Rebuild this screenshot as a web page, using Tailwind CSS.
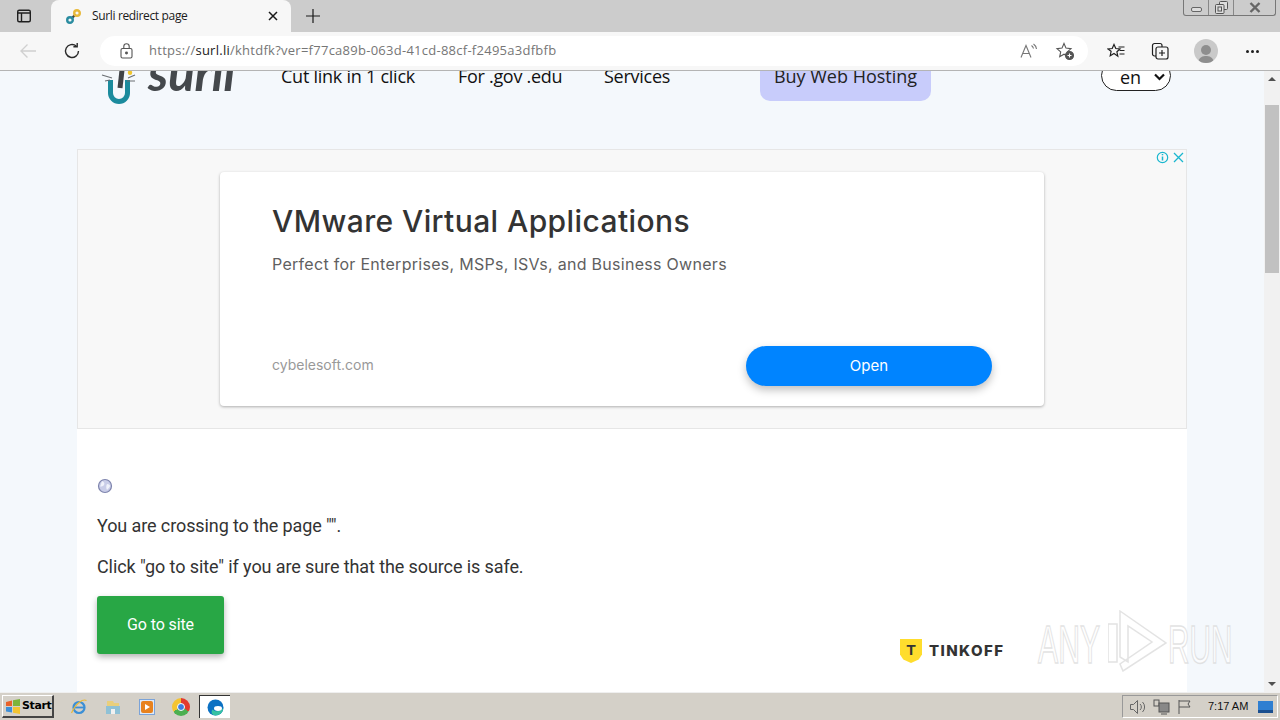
<!DOCTYPE html>
<html><head><meta charset="utf-8"><title>Surli redirect page</title>
<script src="https://cdn.jsdelivr.net/npm/@tailwindcss/browser@4"></script></head>
<body class="w-[1280px] h-[720px] overflow-hidden flex flex-col bg-white font-['Roboto',sans-serif]">
<!-- tab strip -->
<div class="h-[32px] shrink-0 bg-[#cccccc] flex relative">
  <div class="w-[51px] pr-[3px] flex items-center justify-center">
    <svg width="16" height="16" viewBox="0 0 16 16" fill="none" stroke="#1f1f1f" stroke-width="1.4"><rect x="1.7" y="2.2" width="12.6" height="11.6" rx="1.5"/><path d="M1.7 5h12.6M5.5 5v8.8" /></svg>
  </div>
  <div class="w-[240px] h-[32px] bg-[#f7f7f7] rounded-t-[8px] flex items-center pl-[14px] pr-[12px]">
    <svg width="17" height="17" viewBox="0 0 17 17" fill="none" stroke-width="2.4" stroke-linecap="round"><path d="M7 10l3-3" stroke="#444"/><circle cx="5" cy="12" r="2.8" stroke="#2a8ca0"/><circle cx="12" cy="5" r="2.8" stroke="#e8b93a"/></svg>
    <span class="ml-[10px] text-[12px] tracking-[-0.35px] text-[#1a1a1a] font-['Open_Sans',sans-serif] flex-1 whitespace-nowrap">Surli redirect page</span>
    <svg width="12" height="12" viewBox="0 0 12 12" stroke="#1a1a1a" stroke-width="1.5"><path d="M2 2l8 8M10 2l-8 8"/></svg>
  </div>
  <div class="w-[44px] flex items-center justify-center">
    <svg width="14" height="14" viewBox="0 0 14 14" stroke="#1a1a1a" stroke-width="1.2"><path d="M7 0v14M0 7h14"/></svg>
  </div>
  <div class="absolute left-[1183px] top-0 w-[93px] h-[16px] border border-t-0 border-[#777] rounded-b-[3px] flex items-center">
    <div class="w-[25px] h-full border-r border-[#888] flex items-center justify-center"><div class="w-[11px] h-[5px] border border-[#666] rounded-[2px] bg-[#ddd] mt-[3px]"></div></div>
    <div class="w-[25px] h-full border-r border-[#888] flex items-center justify-center"><svg width="13" height="13" viewBox="0 0 13 13" fill="#ddd" stroke="#555"><rect x="4.5" y="0.5" width="8" height="8" rx="1"/><rect x="0.5" y="3.5" width="8.5" height="9" rx="1"/><rect x="3" y="6" width="3.5" height="4"/></svg></div>
    <div class="flex-1 flex items-center justify-center"><svg width="12" height="11" viewBox="0 0 12 11" stroke="#666" stroke-width="2.4"><path d="M1.5 1l9 9M10.5 1l-9 9"/></svg></div>
  </div>
</div>
<!-- toolbar -->
<div class="h-[39px] shrink-0 bg-[#f7f7f7] border-b border-[#b4b4b4] flex items-center">
  <div class="w-[56px] flex justify-center">
    <svg width="18" height="16" viewBox="0 0 18 16" fill="none" stroke="#d0d0d0" stroke-width="1.4"><path d="M17 8H2M8.5 1.5L2 8l6.5 6.5"/></svg>
  </div>
  <div class="w-[32px] flex justify-center">
    <svg width="18" height="18" viewBox="0 0 18 18" fill="none" stroke="#2a2a2a" stroke-width="1.4"><path d="M15.5 9a6.5 6.5 0 1 1-2.2-4.9"/><path d="M14.2 1v3.8h-3.8"/></svg>
  </div>
  <div class="ml-[12px] w-[988px] h-[30px] bg-white rounded-full flex items-center pl-[20px]">
    <svg width="13" height="16" viewBox="0 0 13 16" fill="none" stroke="#555" stroke-width="1.1"><rect x="1" y="5.5" width="11" height="9.5" rx="1.5"/><path d="M3.8 5.5V3.5a2.7 2.7 0 0 1 5.4 0v2"/><circle cx="6.5" cy="10" r="0.9" fill="#555"/></svg>
    <span class="ml-[16px] text-[13px] tracking-[0.26px] text-[#767676] font-['Open_Sans',sans-serif] whitespace-nowrap">https://<span class="text-[#1a1a1a]">surl.li</span>/khtdfk?ver=f77ca89b-063d-41cd-88cf-f2495a3dfbfb</span>
    <div class="ml-auto flex items-center gap-[17px] pr-[13px]">
      <svg width="18" height="16" viewBox="0 0 18 16" fill="none" stroke="#777" stroke-width="1.1"><path d="M1 14.5L6 2.5l5 12M2.8 10.5h6.4"/><path d="M11.5 2.5a5 5 0 0 1 2 3M13.5 1a7 7 0 0 1 3 5"/></svg>
      <svg width="20" height="20" viewBox="0 0 20 20" fill="none" stroke="#555" stroke-width="1.1"><path d="M9 2.5l2 4.6 5 .5-3.7 3.3 1 4.8L9 13.2l-4.3 2.5 1-4.8L2 7.600l5-.5z"/><circle cx="14.500" cy="14.500" r="4" fill="#555"/><path d="M14.500 12.500v4M12.500 14.500h4" stroke="#fff"/></svg>
    </div>
  </div>
  <div class="ml-[15px] w-[26px] flex justify-center"><svg width="18" height="17" viewBox="0 0 18 17" fill="none" stroke="#1f1f1f" stroke-width="1.2"><path d="M7 1.500l1.800 4 4.200.5-3.100 2.800.9 4.400L7 10.500l-3.800 2.200.9-4.400L1 6l4.200-.5z"/><path d="M11.500 4h6M12.500 7.500h5M12.500 11h5"/></svg></div>
  <div class="ml-[18px] w-[26px] flex justify-center"><svg width="18" height="18" viewBox="0 0 18 18" fill="none" stroke="#1f1f1f" stroke-width="1.2"><path d="M5 14H3.500A2 2 0 0 1 1.500 12V3.500a2 2 0 0 1 2-2H9a2 2 0 0 1 2 2V5"/><rect x="5" y="5" width="12" height="12" rx="2" fill="#f7f7f7"/><path d="M11 8v6M8 11h6"/></svg></div>
  <div class="ml-[21px] w-[24px] h-[24px] rounded-full bg-[#c9c9c9] flex flex-col items-center justify-end overflow-hidden"><div class="w-[10px] h-[10px] rounded-full bg-[#8e8e8e] mb-[1px]"></div><div class="w-[16px] h-[7px] rounded-t-full bg-[#8e8e8e]"></div></div>
  <div class="ml-[28px] flex gap-[2px]"><div class="w-[3px] h-[3px] bg-[#1f1f1f] rounded-full"></div><div class="w-[3px] h-[3px] bg-[#1f1f1f] rounded-full"></div><div class="w-[3px] h-[3px] bg-[#1f1f1f] rounded-full"></div></div>
</div>
<!-- page viewport -->
<div class="h-[621px] shrink-0 flex overflow-hidden relative">
  <div class="w-[1264px] bg-[#f4f8fc] overflow-hidden">
    <!-- scrolled header -->
    <div class="h-[78px] -mt-[48px] flex items-end relative">
      <div class="ml-[97px] h-[78px] w-[170px] flex items-end shrink-0">
        <div class="flex items-end h-[34px] overflow-hidden mb-[-4px]">
          <svg width="42" height="34" viewBox="0 0 42 34" fill="none" class="shrink-0"><path d="M13.500 9V22a8.500 8.500 0 0 0 17 0V9" stroke="#1b8b9d" stroke-width="5"/><path d="M25 -1L23 17" stroke="#3f4347" stroke-width="5"/><path d="M5 4l10 3M8 10l5-1M38 4l-7 3M38 10h-8" stroke="#6b6f73" stroke-width="1.200"/><circle cx="33" cy="1.700" r="2.200" fill="#f0c52d"/></svg>
          <span class="ml-[9px] mb-[13px] text-[50px] leading-[40px] italic font-bold text-[#44484c] font-['Lato',sans-serif] tracking-[-0.4px]">surli</span>
        </div>
      </div>
      <nav class="flex h-[78px] items-end ml-[14px] text-[18px] leading-[21px] text-[#111] font-['Open_Sans',sans-serif] whitespace-nowrap">
        <span class="mb-[14px] w-[177px] tracking-[-0.25px]">Cut link in 1 click</span>
        <span class="mb-[14px] w-[146px] tracking-[-0.3px]">For .gov .edu</span>
        <span class="mb-[14px] w-[156px] tracking-[-0.25px]">Services</span>
        <span class="w-[171px] h-[78px] rounded-[10px] bg-[#c8ccfb] flex items-end justify-center pb-[14px] text-[#222]">Buy Web Hosting</span>
      </nav>
      <div class="absolute left-[1101px] top-[37px] w-[70px] h-[31px] rounded-full border border-[#222] bg-white flex items-center text-[18px] text-[#111] font-['Open_Sans',sans-serif]">
        <span class="ml-[18px] mt-[3px]">en</span>
        <svg class="ml-auto mr-[5px] mt-[3px]" width="11" height="8" viewBox="0 0 11 8" fill="none" stroke="#111" stroke-width="2.200"><path d="M1 1.500l4.500 4.500 4.500-4.500"/></svg>
      </div>
    </div>
    <!-- container -->
    <div class="mt-[48px] ml-[77px] w-[1110px] h-[600px] bg-white">
      <!-- ad -->
      <div class="relative h-[280px] bg-[#f8f8f8] border border-[#e6e6e6] pt-[22px] pl-[142px]">
        <div class="absolute top-[1px] right-[2px] flex items-center gap-[4px]">
          <svg width="13" height="13" viewBox="0 0 13 13" fill="none" stroke="#1ab7cf" stroke-width="1.2"><circle cx="6.500" cy="6.500" r="5.200"/><path d="M6.500 5.500v4M6.500 3v1.300" stroke-width="1.500"/></svg>
          <svg width="11" height="11" viewBox="0 0 11 11" stroke="#1ab7cf" stroke-width="1.300"><path d="M1 1l9 9M10 1l-9 9"/></svg>
        </div>
        <div class="w-[824px] h-[234px] bg-white rounded-[4px] shadow-[0_1px_3px_rgba(0,0,0,0.3)] px-[52px] flex flex-col">
          <h1 class="mt-[30px] text-[30px] leading-[38px] font-medium text-[#333] font-['Inter',sans-serif] tracking-[0.4px] whitespace-nowrap">VMware Virtual Applications</h1>
          <p class="mt-[13px] text-[16px] leading-[22px] text-[#5f5f5f] font-['Inter',sans-serif] tracking-[0.29px] whitespace-nowrap">Perfect for Enterprises, MSPs, ISVs, and Business Owners</p>
          <div class="mt-auto mb-[20px] flex items-center justify-between">
            <span class="-mt-[4px] text-[14px] text-[#999] font-['Inter',sans-serif]">cybelesoft.com</span>
            <div class="w-[246px] h-[40px] rounded-full bg-[#0084ff] shadow-[0_4px_8px_rgba(0,0,0,0.25)] flex items-center justify-center text-[15px] text-white font-['Inter',sans-serif]">Open</div>
          </div>
        </div>
      </div>
      <!-- body -->
      <div class="pl-[20px] pt-[49px] relative">
        <svg width="16" height="16" viewBox="0 0 16 16" fill="none"><circle cx="8" cy="8" r="6.500" fill="#c9cde8" stroke="#7e84ad" stroke-width="1.200"/><path d="M5 3c2 1 3 2 2 4S3 8 3 9M10 6c2 0 3 1 3 2s-2 3-3 4c-1-2-1-4 0-6z" fill="#f0f2fb"/></svg>
        <p class="mt-[18px] text-[18px] leading-[27px] text-[#333] tracking-[-0.1px]">You are crossing to the page "".</p>
        <p class="mt-[14px] text-[18px] leading-[27px] text-[#333] tracking-[-0.1px]">Click "go to site" if you are sure that the source is safe.</p>
        <div class="mt-[16px] w-[127px] h-[58px] rounded-[3px] bg-[#28a745] shadow-[0_3px_6px_rgba(0,0,0,0.3)] flex items-center justify-center text-[16px] tracking-[-0.1px] text-white">Go to site</div>
        <!-- tinkoff -->
        <div class="absolute left-[823px] top-[210px] flex items-center">
          <div class="w-[22px] h-[24px] bg-[#ffdd2d] flex items-center justify-center pb-[3px] [clip-path:polygon(0_0,100%_0,100%_65%,85%_85%,50%_100%,15%_85%,0_65%)] text-[15px] font-black leading-none text-[#333] font-['Liberation_Sans',sans-serif]">T</div>
          <span class="ml-[7px] text-[15px] font-extrabold tracking-[1.4px] text-[#333] font-['Inter',sans-serif]">TINKOFF</span>
        </div>
      </div>
    </div>
  </div>
  <!-- scrollbar -->
  <div class="w-[16px] bg-[#f1f1f1] flex flex-col items-center relative">
    <div class="h-[16px] w-full flex items-center justify-center"><div class="w-0 h-0 border-x-[4px] border-x-transparent border-b-[4px] border-b-[#505050]"></div></div>
    <div class="mt-[18px] w-[14px] h-[168px] bg-[#c1c1c1]"></div>
    <div class="mt-auto h-[16px] w-full flex items-center justify-center"><div class="w-0 h-0 border-x-[4px] border-x-transparent border-t-[4px] border-t-[#505050]"></div></div>
  </div>
  <!-- watermark -->
  <div class="absolute left-[1038px] top-[539px] flex items-start opacity-70 pointer-events-none">
    <span class="mt-[7px] w-[70px] text-[54px] leading-none text-white font-['Liberation_Sans',sans-serif] [-webkit-text-stroke:1.5px_#d8d8d8] [transform:scaleX(0.56)] origin-left whitespace-nowrap">ANY</span>
    <svg class="w-[60px] h-[62px]" width="60" height="62" viewBox="0 0 60 62" fill="#fff" stroke="#d8d8d8" stroke-width="1.500"><path d="M0 14h9v38H0z"/><path d="M12 1L58 33 15 61 12 54 44 32 20 16V52L12 47z"/></svg>
    <span class="mt-[7px] text-[54px] leading-none text-white font-['Liberation_Sans',sans-serif] [-webkit-text-stroke:1.5px_#d8d8d8] [transform:scaleX(0.55)] origin-left whitespace-nowrap">RUN</span>
  </div>
</div>
<!-- taskbar -->
<div class="h-[28px] shrink-0 bg-[#d4d0c8] border-t border-[#efefef] flex items-center relative">
  <div class="ml-[2px] w-[52px] h-[23px] bg-[#d4d0c8] border-t border-l border-white border-r-2 border-b-2 border-r-[#444] border-b-[#444] flex items-center pl-[2px]">
    <svg width="16" height="15" viewBox="0 0 16 15" class="shrink-0"><path d="M1 3l6-1.500V7H1z" fill="#e8622a"/><path d="M8 1.200l7-1.200v7H8z" fill="#7cb43a"/><path d="M1 8h6v5.500L1 12.500z" fill="#3d8fd8"/><path d="M8 8h7v7l-7-1.200z" fill="#f2c431"/></svg>
    <span class="ml-[1px] text-[11px] font-bold text-black font-['DejaVu_Sans',sans-serif] tracking-[-0.4px]">Start</span>
  </div>
  <div class="ml-[16px] w-[18px] flex justify-center"><svg width="18" height="18" viewBox="0 0 18 18" fill="none"><circle cx="9" cy="9.500" r="5.500" stroke="#3b8fd6" stroke-width="2.200"/><path d="M4 9.500h10" stroke="#3b8fd6" stroke-width="1.800"/><path d="M1.500 15C6 5 13 0.500 16.500 2.500" stroke="#e9b93a" stroke-width="1.200"/></svg></div>
  <div class="ml-[16px] w-[18px] flex justify-center"><svg width="16" height="16" viewBox="0 0 16 16"><path d="M2 2h6l1 2h5v5H2z" fill="#e9cf7c"/><rect x="1" y="7" width="14" height="8" fill="#8fc1d6"/><rect x="6" y="10" width="4" height="5" fill="#f1f1f1"/></svg></div>
  <div class="ml-[17px] w-[16px] h-[16px] border border-[#7ba3d8] bg-[#dfeaf8] flex items-center justify-center"><div class="w-[12px] h-[12px] bg-[#e8821e] rounded-[2px] flex items-center justify-center"><div class="w-0 h-0 border-y-[3px] border-y-transparent border-l-[5px] border-l-white"></div></div></div>
  <div class="ml-[17px] w-[18px] h-[18px] rounded-full bg-[conic-gradient(#e33b2e_0_33%,#4caf50_33%_66%,#f5c431_66%_100%)] flex items-center justify-center"><div class="w-[8px] h-[8px] rounded-full bg-[#3d7fe0] border border-white"></div></div>
  <div class="ml-[9px] w-[31px] h-[23px] bg-white border-t border-l border-[#333] flex items-center justify-center"><svg width="17" height="17" viewBox="0 0 17 17"><circle cx="8.500" cy="8.500" r="8" fill="#0c71c3"/><path d="M16.500 9c-.5 4.500-4 7.500-8 7.500C5 16.500 3.500 13 5.500 10.500c3 3 7.500 2 11-1.500z" fill="#36c2a3"/><ellipse cx="11" cy="9.500" rx="4" ry="2.400" fill="#fff"/></svg></div>
  <div class="ml-auto mr-[2px] w-[156px] h-[23px] border border-[#999] border-r-white border-b-white flex items-center pl-[6px]">
    <svg width="18" height="16" viewBox="0 0 18 16" fill="none" stroke="#666"><path d="M1.500 5.500h3l4-4v13l-4-4h-3zM11 5a4 4 0 0 1 0 6M13.500 3a7 7 0 0 1 0 10"/></svg>
    <svg class="ml-[6px]" width="17" height="16" viewBox="0 0 17 16" fill="none" stroke="#555"><rect x="1" y="1" width="5" height="6"/><rect x="6" y="4" width="10" height="9" fill="#888"/><path d="M8 15h6"/></svg>
    <svg class="ml-[7px]" width="16" height="16" viewBox="0 0 16 16" fill="none" stroke="#555"><path d="M2 1v14M2 2h11l-2 3 2 3H2"/></svg>
    <span class="ml-[15px] text-[11px] text-[#111] font-['Liberation_Sans',sans-serif] whitespace-nowrap">7:17 AM</span>
    <svg class="ml-[10px]" width="15" height="14" viewBox="0 0 15 14"><rect width="15" height="11" y="1" fill="#2f7fd1"/><rect y="10" width="15" height="3" fill="#1b4f8f"/></svg>
  </div>
</div>
</body></html>
